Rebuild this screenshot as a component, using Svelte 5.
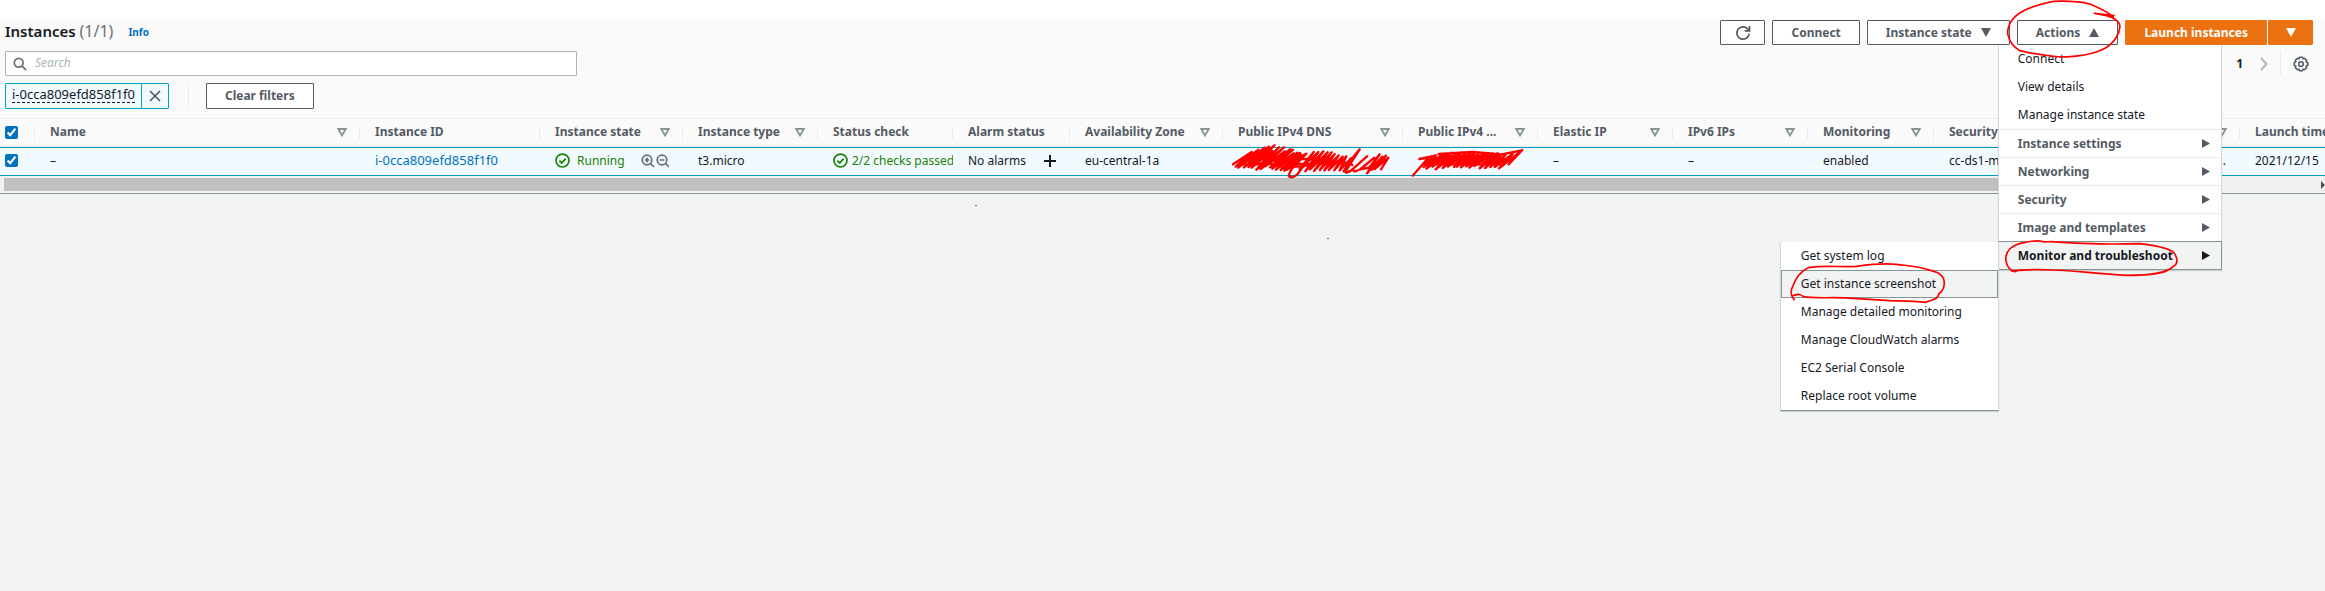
<script>
  const columns = [
    { label: 'Name', width: 325, sort: true },
    { label: 'Instance ID', width: 180 },
    { label: 'Instance state', width: 143, sort: true },
    { label: 'Instance type', width: 135, sort: true },
    { label: 'Status check', width: 135 },
    { label: 'Alarm status', width: 117 },
    { label: 'Availability Zone', width: 153, sort: true },
    { label: 'Public IPv4 DNS', width: 180, sort: true },
    { label: 'Public IPv4 ...', width: 135, sort: true },
    { label: 'Elastic IP', width: 135, sort: true },
    { label: 'IPv6 IPs', width: 135, sort: true },
    { label: 'Monitoring', width: 126, sort: true },
    { label: 'Security', width: 153 },
    { label: '', width: 153, sort: true },
    { label: 'Launch time' }
  ];

  const actions = ['Connect', 'View details', 'Manage instance state'];
  const groups = ['Instance settings', 'Networking', 'Security', 'Image and templates'];
  const troubleshoot = [
    'Get system log',
    'Get instance screenshot',
    'Manage detailed monitoring',
    'Manage CloudWatch alarms',
    'EC2 Serial Console',
    'Replace root volume'
  ];

  let filter = $state('');
  let selected = $state(true);
</script>

{#snippet check()}
  <svg class="ok" viewBox="0 0 16 16" width="15" height="15" aria-hidden="true">
    <circle cx="8" cy="8" r="6.9" />
    <path d="M4.6 8.1 7.2 10.6 11.4 6" />
  </svg>
{/snippet}

<main>
  <section class="panel">
    <header class="bar">
      <h1>Instances <span class="count">(1/1)</span></h1>
      <a class="info" href="#info">Info</a>
      <div class="buttons">
        <button class="btn square" aria-label="Refresh">
          <svg viewBox="0 0 16 16" width="16" height="16">
            <path d="M14.2 8.6A6.2 6.2 0 1 1 12.6 3.8L14.4 5.6M14.5 1V5.8H9.7" />
          </svg>
        </button>
        <button class="btn">Connect</button>
        <button class="btn drop">Instance state
          <svg class="tri" viewBox="0 0 10 9" width="10" height="9"><path d="M0 0H10L5 9Z" /></svg>
        </button>
        <div class="actions">
          <button class="btn drop" aria-expanded="true">Actions
            <svg class="tri" viewBox="0 0 10 9" width="10" height="9"><path d="M0 9H10L5 0Z" /></svg>
          </button>
          <ul class="menu top">
            {#each actions as item}
              <li><button class="item">{item}</button></li>
            {/each}
            {#each groups as item}
              <li class="group">
                <button class="item">{item}
                  <svg class="tri" viewBox="0 0 8 9" width="8" height="9"><path d="M0 0V9L8 4.500Z" /></svg>
                </button>
              </li>
            {/each}
            <li class="group open">
              <button class="item">Monitor and troubleshoot
                <svg class="tri" viewBox="0 0 8 9" width="8" height="9"><path d="M0 0V9L8 4.500Z" /></svg>
              </button>
              <ul class="menu sub">
                {#each troubleshoot as item, i}
                  <li class:hot={i === 1}><button class="item">{item}</button></li>
                {/each}
              </ul>
              <svg class="ink troubleshoot-ink" viewBox="60 180 1200 210" width="400" height="70" aria-hidden="true">
                <path d="M774 275C760 284 742 270 738 245C734 215 757 196 795 190C820 186 828 184 840 186C850 190 856 189 870 188C930 192 1000 195 1060 195L1140 194C1190 200 1235 210 1244 224C1253 240 1254 256 1240 262C1220 284 1170 289 1100 289C1010 285 950 275 880 273C830 270 800 271 755 276" />
                <path d="M103 362C94 352 91 345 95 330C104 304 122 275 145 266C190 258 240 265 290 262C340 255 375 253 410 256C450 261 480 263 500 271C530 278 547 284 552 304C556 323 545 338 536 345C536 360 515 364 495 370C465 366 430 366 390 365L280 358C220 353 165 360 130 353C123 347 119 345 114 346L98 350" />
              </svg>
            </li>
          </ul>
          <svg class="ink actions-ink" viewBox="75 -3 354 180" width="118" height="60" aria-hidden="true">
            <path d="M400 52C385 34 350 22 330 12C290 2 250 3 220 4C180 12 140 25 115 42C90 60 80 85 84 105C90 130 105 144 120 152C150 160 195 166 240 171C300 171 345 161 375 145C405 127 418 100 420 80C420 64 400 52 380 47L343 40L402 47" />
          </svg>
        </div>
        <div class="launch">
          <button class="btn primary">Launch instances</button>
          <button class="btn primary square" aria-label="More launch options">
            <svg class="tri" viewBox="0 0 10 9" width="10" height="9"><path d="M0 0H10L5 9Z" /></svg>
          </button>
        </div>
      </div>
    </header>

    <div class="tools">
      <label class="search">
        <svg viewBox="0 0 16 16" width="14" height="14" aria-hidden="true">
          <circle cx="6.500" cy="6.500" r="5" /><path d="M10.200 10.200 15 15" />
        </svg>
        <input type="text" placeholder="Search" aria-label="Search" bind:value={filter} />
      </label>
      <nav class="pages" aria-label="Pages">
        <button class="page">1</button>
        <button class="next" aria-label="Next page">
          <svg viewBox="0 0 8 14" width="8" height="14"><path d="M1 1 6.500 7 1 13" /></svg>
        </button>
        <button class="gear" aria-label="Preferences">
          <svg viewBox="0 0 16 16" width="16" height="16">
            <path d="M6.600 1.300H9.400L10 2.700 11.600 2.300 13.600 4.300 13.200 5.900 14.700 6.600V9.400L13.200 10.100 13.600 11.700 11.600 13.700 10 13.300 9.400 14.700H6.600L6 13.300 4.400 13.700 2.400 11.700 2.800 10.100 1.300 9.400V6.600L2.800 5.900 2.400 4.300 4.400 2.300 6 2.700Z" />
            <circle cx="8" cy="8" r="2.300" />
          </svg>
        </button>
      </nav>
    </div>

    <div class="filters">
      <div class="token">
        <span><b>i-0cca809efd858f1f0</b></span>
        <button aria-label="Remove filter">
          <svg viewBox="0 0 12 12" width="12" height="12"><path d="M1 1 11 11M11 1 1 11" /></svg>
        </button>
      </div>
      <div class="clear"><button class="btn">Clear filters</button></div>
    </div>

    <div class="grid">
      <table>
        <colgroup>
          <col style:width="35px" />
          {#each columns as c}
            <col style:width={c.width ? `${c.width}px` : 'auto'} />
          {/each}
        </colgroup>
        <thead>
          <tr>
            <th class="pick"><div><input type="checkbox" aria-label="Select all" bind:checked={selected} /></div></th>
            {#each columns as c}
              <th>
                <div><span>{c.label}</span>
                  {#if c.sort}
                    <svg class="sort" viewBox="0 0 10 9" width="10" height="9"><path d="M1.200 1H8.800L5 7.400Z" /></svg>
                  {/if}
                </div>
              </th>
            {/each}
          </tr>
        </thead>
        <tbody>
          <tr>
            <td class="pick"><input type="checkbox" aria-label="Select instance" bind:checked={selected} /></td>
            <td>–</td>
            <td><a class="id" href="#instance">i-0cca809efd858f1f0</a></td>
            <td>
              <div class="state">
                {@render check()}<span>Running</span>
                <svg class="lens" viewBox="0 0 28 14" width="28" height="14" aria-hidden="true">
                  <circle cx="6" cy="6" r="4.800" /><path d="M9.500 9.500 13 13M6 3.600V8.400M3.600 6H8.400" />
                  <circle cx="21" cy="6" r="4.800" /><path d="M24.500 9.500 28 13M18.600 6H23.400" />
                </svg>
              </div>
            </td>
            <td>t3.micro</td>
            <td><div class="status">{@render check()}<span>2/2 checks passed</span></div></td>
            <td>
              <div class="alarm">No alarms
                <svg viewBox="0 0 12 12" width="12" height="12" aria-hidden="true"><path d="M6 0V12M0 6H12" /></svg>
              </div>
            </td>
            <td>eu-central-1a</td>
            <td class="marked">
              <svg class="ink scribble" viewBox="36 96 480 111" width="160" height="37" aria-hidden="true">
                <path d="M42 163 98 126 50 170 118 119 58 173 137 113 75 172 150 110 88 171 166 106 98 173 160 122 112 179 180 112 119 174 195 112 125 177 197 124 140 168 214 118 153 172 222 119 160 176 224 130 171 179 235 128 185 180 243 129 196 182 216 148C224 135 248 130 247 135L201 180C209 184 240 140 262 131L217 178C198 210 222 204 235 193L284 126 242 177 298 126 259 184 313 124 273 178 326 127 285 183 338 127 303 180 347 132 316 181 359 136 330 180 371 140 346 181 382 139 362 181 397 144 374 184 389 158 422 118 384 177C374 193 384 188 396 182L444 139 401 177C400 190 420 182 432 171L466 143 424 178 450 173 482 133 444 190 490 140 459 179 501 137 467 177 508 143 486 178" />
                <path d="M60 163H130L140 152H200L215 162H280L300 155H370L400 165M120 142H190L220 147H330L350 160H290L250 170H180L150 160H90" />
              </svg>
            </td>
            <td class="marked">
              <svg class="ink scribble" viewBox="552 96 345 111" width="115" height="37" aria-hidden="true">
                <path d="M557 197 604 143 577 147 628 136 586 164 634 143 590 171 650 132 598 176 661 132 617 170 674 128 626 178 690 129 647 174 704 127 663 170 720 127 681 171 731 129 690 170 744 128 702 172 757 129 718 169 771 130 727 173 783 130 742 168 797 130 758 175 812 130 774 174 820 134 790 171 836 134 803 171 857 132 816 175 886 120 845 163 884 121 824 133 738 126 635 132" />
                <path d="M600 155H840M620 145H830M630 163H820M640 138H820" />
              </svg>
            </td>
            <td>–</td>
            <td>–</td>
            <td>enabled</td>
            <td>cc-ds1-m</td>
            <td class="end">...</td>
            <td>2021/12/15</td>
          </tr>
        </tbody>
      </table>
    </div>
    <div class="scroll" aria-hidden="true">
      <div class="thumb"></div>
      <svg viewBox="0 0 4 8" width="4" height="8"><path d="M0 0V8L4 4Z" /></svg>
    </div>
  </section>
  <i class="speck one"></i>
  <i class="speck two"></i>
</main>

<style>
  :global(body) {
    background: #f2f3f3;
  }
  main {
    position: relative;
    box-sizing: border-box;
    min-height: 100vh;
    font-family: 'Noto Sans', 'Open Sans', sans-serif;
    font-size: 12px;
    line-height: 16px;
    color: #16191f;
    border-top: 19px solid #fff;
  }
  button,
  input {
    font: inherit;
    color: inherit;
  }
  button {
    cursor: pointer;
    background: none;
    border: 0;
    padding: 0;
  }
  a {
    color: #0073bb;
    text-decoration: none;
  }
  svg {
    display: block;
    flex: none;
    fill: none;
    stroke: #545b64;
  }
  ul {
    list-style: none;
    margin: 0;
    padding: 0;
  }
  .tri {
    fill: #545b64;
    stroke: none;
  }
  .panel {
    background: #fafafa;
  }
  .bar {
    display: flex;
    align-items: flex-start;
    padding: 1px 12px 0 5px;
  }
  h1 {
    margin: 0;
    font-size: 15px;
    font-weight: 600;
    line-height: 22px;
  }
  .count {
    font-size: 16px;
    font-weight: 400;
    line-height: 16px;
    color: #687078;
  }
  .info {
    margin-left: 15px;
    font-size: 10px;
    font-weight: 700;
    line-height: 25px;
  }
  .buttons {
    display: flex;
    gap: 7px;
    margin-left: auto;
  }
  .btn {
    box-sizing: border-box;
    height: 25px;
    padding: 0 18px;
    border: 1px solid #545b64;
    border-radius: 1px;
    background: #fff;
    color: #545b64;
    font-weight: 700;
    white-space: nowrap;
  }
  .square {
    display: flex;
    align-items: center;
    justify-content: center;
    width: 45px;
    padding: 0;
  }
  .square svg {
    stroke-width: 1.700;
  }
  .drop {
    display: flex;
    align-items: center;
    gap: 9px;
    padding: 0 18px;
  }
  .launch {
    display: flex;
    gap: 1px;
  }
  .primary {
    border-color: #ec7211;
    background: #ec7211;
    color: #fff;
  }
  .primary .tri {
    fill: #fff;
  }
  .actions {
    position: relative;
    z-index: 3;
  }
  .menu {
    position: absolute;
    box-sizing: border-box;
    background: #fff;
    border: 1px solid #d5dbdb;
    border-bottom-color: #879596;
    box-shadow: 0 1px 1px #00000026;
  }
  .top {
    top: 25px;
    left: -19px;
    width: 224px;
    border-top: 0;
  }
  .sub {
    top: 0;
    right: 100%;
    width: 219px;
    border-top: 0;
  }
  .item {
    display: flex;
    align-items: center;
    justify-content: space-between;
    box-sizing: border-box;
    width: 100%;
    height: 28px;
    padding: 0 11px 0 19px;
    text-align: left;
    white-space: nowrap;
  }
  .group {
    position: relative;
    border-top: 1px solid #eaeded;
  }
  .group > .item {
    height: 27px;
    font-weight: 700;
    color: #545b64;
  }
  .open {
    border: 1px solid #879596;
    background: #f2f3f3;
    margin: 0 -1px -1px;
  }
  .open > .item {
    color: #16191f;
  }
  .open > .item .tri {
    fill: #16191f;
  }
  .sub .item {
    padding-left: 20px;
  }
  .hot {
    background: #f2f3f3;
    outline: 1px solid #879596;
    outline-offset: -1px;
  }
  .ink {
    position: absolute;
    pointer-events: none;
    stroke: #f00;
    stroke-width: 5;
    stroke-linecap: round;
    stroke-linejoin: round;
  }
  .actions-ink {
    top: -21px;
    left: -12px;
  }
  .troubleshoot-ink {
    top: -3px;
    left: -219px;
  }
  .scribble {
    top: -6px;
    left: 8px;
    stroke-width: 7;
  }
  .tools {
    display: flex;
    justify-content: space-between;
    padding: 6px 16px 0 5px;
  }
  .search {
    display: flex;
    align-items: center;
    gap: 8px;
    box-sizing: border-box;
    width: 572px;
    height: 25px;
    padding: 0 7px;
    border: 1px solid #aab7b8;
    border-radius: 1px;
    background: #fff;
  }
  .search svg {
    stroke: #687078;
    stroke-width: 2;
  }
  .search input {
    flex: 1;
    min-width: 0;
    padding: 0 0 1px;
    border: 0;
    outline: 0;
    background: none;
  }
  .search input::placeholder {
    color: #aab7b8;
    font-style: italic;
  }
  .pages {
    display: flex;
    align-items: center;
  }
  .page {
    font-weight: 700;
    margin-right: 17px;
  }
  .next svg {
    stroke: #aab7b8;
    stroke-width: 2;
  }
  .next {
    margin-right: 12px;
  }
  .gear {
    display: flex;
    align-items: center;
    height: 25px;
    padding-left: 12px;
    border-left: 1px solid #eaeded;
  }
  .gear svg {
    stroke-width: 1.600;
  }
  .filters {
    display: flex;
    padding: 7px 5px 9px;
  }
  .token {
    display: flex;
    box-sizing: border-box;
    height: 26px;
    border: 1px solid #00a1c9;
    border-radius: 1px;
    background: #f1faff;
  }
  .token span {
    padding: 2px 6px 0;
  }
  .token b {
    display: block;
    border-bottom: 1px dashed #16191f;
    font-size: 13px;
    font-weight: 400;
  }
  .id {
    font-size: 13px;
  }
  .token button {
    padding: 0 7px;
    border-left: 1px solid #00a1c9;
  }
  .token svg {
    stroke-width: 1.700;
  }
  .clear {
    margin-left: 19px;
    padding-left: 17px;
    border-left: 1px solid #eaeded;
  }
  .clear .btn {
    height: 26px;
  }
  .grid {
    overflow-x: clip;
    border-top: 1px solid #eaeded;
  }
  table {
    width: 100%;
    min-width: 2325px;
    table-layout: fixed;
    border-collapse: separate;
    border-spacing: 0;
  }
  th {
    height: 27px;
    padding: 0;
    border-bottom: 1px solid #eaeded;
    color: #545b64;
    font-weight: 700;
    text-align: left;
    white-space: nowrap;
  }
  th div {
    display: flex;
    align-items: center;
    justify-content: space-between;
    height: 14px;
    padding: 0 12px 0 15px;
    border-right: 1px solid #eaeded;
  }
  th:last-child div {
    padding-right: 0;
    border: 0;
  }
  th span {
    line-height: 14px;
    padding-bottom: 2px;
  }
  .sort {
    stroke: #879596;
    stroke-width: 1.900;
  }
  td {
    height: 25px;
    padding: 0 0 2px 15px;
    border: solid #0099c2;
    border-width: 1px 0;
    background: #f1faff;
    overflow: hidden;
    white-space: nowrap;
  }
  .pick,
  .pick div {
    padding-left: 5px;
    padding-right: 0;
  }
  th.pick {
    padding: 0;
  }
  .pick input {
    display: block;
    width: 13px;
    height: 13px;
    margin: 0;
    accent-color: #0073bb;
  }
  td.marked {
    position: relative;
    overflow: visible;
  }
  td.end {
    padding-right: 14px;
    text-align: right;
  }
  .state,
  .status,
  .alarm {
    display: flex;
    align-items: center;
  }
  .ok {
    stroke: #1d8102;
    stroke-width: 1.800;
  }
  .state span,
  .status span {
    color: #1d8102;
    margin-left: 7px;
  }
  .status span {
    margin-left: 4px;
  }
  .lens {
    margin-left: auto;
    margin-right: 14px;
    stroke: #687078;
    stroke-width: 1.700;
  }
  .alarm {
    justify-content: space-between;
    padding-right: 14px;
  }
  .alarm svg {
    stroke: #16191f;
    stroke-width: 2;
  }
  .scroll {
    display: flex;
    align-items: center;
    justify-content: space-between;
    height: 17px;
    padding-left: 4px;
    border-bottom: 1px solid #879596;
    background: #f1f1f1;
  }
  .thumb {
    width: 88%;
    height: 13px;
    background: #c1c1c1;
  }
  .scroll svg {
    fill: #505050;
    stroke: none;
  }
  .speck {
    position: absolute;
    width: 2px;
    height: 1px;
    background: #f33;
  }
  .one {
    top: 186px;
    left: 975px;
  }
  .two {
    top: 219px;
    left: 1327px;
  }
</style>
